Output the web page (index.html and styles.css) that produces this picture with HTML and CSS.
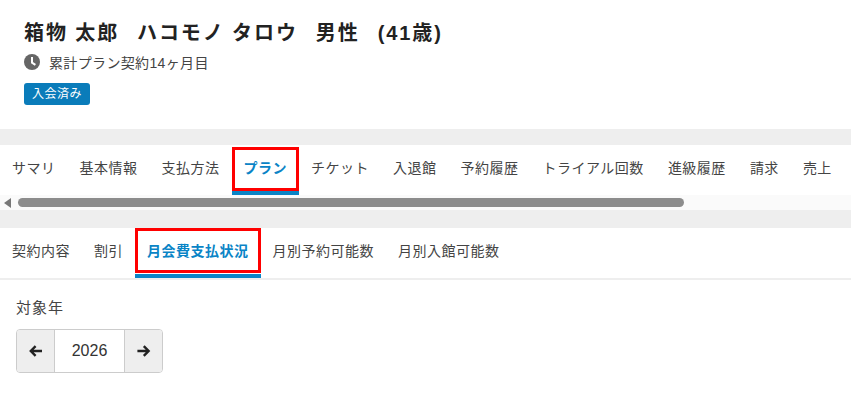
FILE: index.html
```html
<!DOCTYPE html>
<html lang="ja">
<head>
    <meta charset="UTF-8">
    <meta name="viewport" content="width=device-width, initial-scale=1.0">
    <title>会員詳細</title>
    <link rel="stylesheet" href="styles.css">
</head>
<body>
    <div class="member">
        <h1 class="member-name"><span>箱物 太郎</span><span>ハコモノ タロウ</span><span>男性</span><span>(41歳)</span></h1>
        <p class="member-plan">
            <svg class="clock" viewBox="0 0 16 16" width="16" height="16">
                <circle cx="8" cy="8" r="8" fill="#666"/>
                <path d="M8 3V8.6L11.4 10.8" fill="none" stroke="#fff" stroke-width="2"/>
            </svg>
            累計プラン契約14ヶ月目
        </p>
        <span class="badge">入会済み</span>
    </div>

    <div class="band"></div>
    <div class="tabs tabs-main">
        <a class="tab">サマリ</a>
        <a class="tab">基本情報</a>
        <a class="tab">支払方法</a>
        <a class="tab active">プラン<i class="mark"></i></a>
        <a class="tab">チケット</a>
        <a class="tab">入退館</a>
        <a class="tab">予約履歴</a>
        <a class="tab">トライアル回数</a>
        <a class="tab">進級履歴</a>
        <a class="tab">請求</a>
        <a class="tab">売上</a>
    </div>
    <div class="scrollbar">
        <span class="scroll-arrow"></span>
        <span class="scroll-thumb"></span>
    </div>
    <div class="band band-low"></div>
    <div class="tabs tabs-sub">
        <a class="tab">契約内容</a>
        <a class="tab">割引</a>
        <a class="tab active">月会費支払状況<i class="mark"></i></a>
        <a class="tab">月別予約可能数</a>
        <a class="tab">月別入館可能数</a>
    </div>

    <div class="content">
        <label class="year-label">対象年</label>
        <div class="year-picker">
            <button class="year-btn">
                <svg viewBox="0 0 14 14" width="14" height="14"><path d="M6.6 2.2L1.8 7L6.6 11.8M2.2 7H13" fill="none" stroke="#222" stroke-width="2.4"/></svg>
            </button>
            <div class="year-value">2026</div>
            <button class="year-btn">
                <svg viewBox="0 0 14 14" width="14" height="14"><path d="M6.8 2.2L11.6 7L6.8 11.8M11.2 7H.4" fill="none" stroke="#222" stroke-width="2.4"/></svg>
            </button>
        </div>
    </div>
</body>
</html>
```

FILE: styles.css
```css
*{
    box-sizing: border-box;
}
body{
    margin: 0;
    background-color: #fff;
    color: #333;
    font-family: "Liberation Sans", "Noto Sans CJK JP", sans-serif;
    font-size: 14px;
    overflow: hidden;
}
.member{
    height: 129px;
    padding: 20px 24px 0;
}
.member-name{
    display: flex;
    gap: 18px;
    margin: 0;
    height: 26px;
    font-size: 20px;
    line-height: 26px;
    letter-spacing: 1.9px;
    color: #222;
}
.member-plan{
    display: flex;
    align-items: center;
    gap: 9px;
    margin: 6px 0 0;
    height: 20px;
    font-size: 14px;
    letter-spacing: .35px;
    color: #444;
}
.badge{
    display: inline-block;
    margin-top: 11px;
    padding: 0 8px;
    height: 22px;
    line-height: 22px;
    border-radius: 3px;
    background-color: #0a7cba;
    color: #fff;
    font-size: 12px;
    letter-spacing: .5px;
}
.band{
    height: 16px;
    background-color: #eee;
}
.band-low{
    height: 18px;
}
.tabs{
    display: flex;
    white-space: nowrap;
    overflow: hidden;
    letter-spacing: .5px;
}
.tabs-main{
    height: 50px;
}
.tabs-sub{
    height: 52px;
    border-bottom: 2px solid #eee;
}
.tab{
    position: relative;
    flex: none;
    padding: 0 12px;
    line-height: 46px;
    color: #444;
}
.tab.active{
    color: #0a84c6;
    font-weight: bold;
    border-bottom: 4px solid #0a84c6;
}
.mark{
    position: absolute;
    left: 0;
    right: 0;
    top: 2px;
    bottom: 0;
    border: 3px solid #f00;
}
.tabs-sub .mark{
    top: 0;
    bottom: 1px;
}
.scrollbar{
    display: flex;
    align-items: center;
    height: 15px;
    background-color: #fafafa;
}
.scroll-arrow{
    margin-left: 4px;
    border-style: solid;
    border-width: 5px 7px 5px 0;
    border-color: transparent #777 transparent transparent;
}
.scroll-thumb{
    width: 666px;
    height: 9px;
    margin-left: 7px;
    border-radius: 5px;
    background-color: #8c8c8c;
}
.content{
    padding: 18px 16px 0;
}
.year-label{
    display: block;
    height: 20px;
    font-size: 15px;
    line-height: 20px;
    letter-spacing: 1px;
    color: #444;
}
.year-picker{
    display: flex;
    width: 147px;
    height: 44px;
    margin-top: 11px;
    border: 1px solid #ccc;
    border-radius: 4px;
    overflow: hidden;
}
.year-btn{
    display: flex;
    align-items: center;
    justify-content: center;
    width: 37px;
    padding: 0;
    border: 0;
    background-color: #eee;
}
.year-value{
    flex: 1;
    border-left: 1px solid #ccc;
    border-right: 1px solid #ccc;
    text-align: center;
    line-height: 42px;
    font-size: 16px;
    color: #333;
}
```
